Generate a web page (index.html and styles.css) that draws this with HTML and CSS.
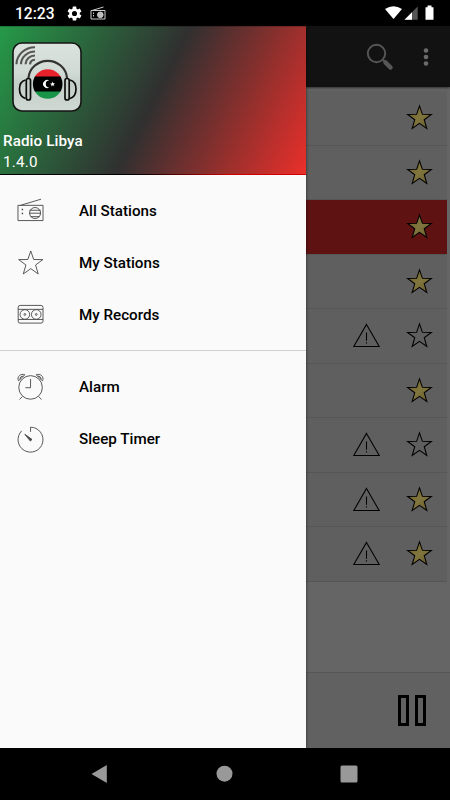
FILE: index.html
```html
<!DOCTYPE html>
<html lang="en">
<head>
    <meta charset="UTF-8">
    <meta name="viewport" content="width=device-width, initial-scale=1.0">
    <title>Radio Libya</title>
    <link rel="stylesheet" href="styles.css">
</head>
<body>
    <!-- Shared icons -->
    <svg class="defs">
        <defs>
            <linearGradient id="gold" x1="0" y1="0" x2="1" y2="1">
                <stop offset="0" stop-color="#6a5d22"/>
                <stop offset=".5" stop-color="#82763f"/>
                <stop offset="1" stop-color="#645a26"/>
            </linearGradient>
            <linearGradient id="plate" x1="0" y1="0" x2="0" y2="1">
                <stop offset="0" stop-color="#dce3df"/>
                <stop offset=".45" stop-color="#d0dad4"/>
                <stop offset=".6" stop-color="#c3cfc8"/>
                <stop offset="1" stop-color="#d0d9d3"/>
            </linearGradient>
            <clipPath id="flag"><circle cx="35.7" cy="42" r="14.8"/></clipPath>
        </defs>
        <symbol id="star" viewBox="0 0 28 28">
            <path d="M14 2 L17 10.7 L26.3 10.8 L18.9 16.3 L21.6 25.4 L14 20 L6.4 25.4 L9.1 16.3 L1.7 10.8 L11 10.7 Z"/>
        </symbol>
        <symbol id="warn" viewBox="0 0 28 28">
            <path d="M14 2.5 L27.2 25.5 H.8 Z M14 11 V19.5 M14 21 V22.3"/>
        </symbol>
    </svg>

    <div class="status-bar">
        <span class="clock">12:23</span>
        <svg class="gear" viewBox="0 0 24 24"><path fill="#fff" fill-rule="evenodd" d="M19.4 13a7 7 0 0 0 0-2l2.4-1.9-2.3-4-2.8 1.1a7 7 0 0 0-1.9-1L14.4 2H9.600l-.4 3.200a7 7 0 0 0-1.900 1L4.500 5.100l-2.300 4L4.600 11a7 7 0 0 0 0 2l-2.400 1.900 2.300 4 2.800-1.100a7 7 0 0 0 1.900 1l.4 3.200h4.800l.4-3.200a7 7 0 0 0 1.900-1l2.800 1.100 2.300-4zM12 15.600a3.600 3.600 0 1 1 0-7.200 3.600 3.600 0 0 1 0 7.200z"/></svg>
        <svg class="mini-radio" viewBox="0 0 16 14" fill="none" stroke="#ccc"><path d="M1 4.500h14v8.500h-14zM2 4.500 13.500 1M3.500 6.500v1.500M3.500 9v1.500"/><circle cx="10.300" cy="8.800" r="2.800" fill="#bbb"/></svg>
        <svg class="signals" viewBox="0 0 52 16">
            <path fill="#fff" d="M1 4 Q9.500 -1.500 18 4 L9.500 14 Z"/>
            <path fill="#555" d="M33.700 1.500 V14.700 H20.500 Z"/>
            <path fill="#fff" d="M28 7.200 V14.700 H20.500 Z"/>
            <path fill="#fff" d="M41.500 2.300h2V.5h4v1.800h2V14.700h-8z"/>
        </svg>
    </div>

    <div class="app">
        <div class="toolbar">
            <svg class="search" viewBox="0 0 28 28" fill="none" stroke="#565656"><circle cx="10.500" cy="10.500" r="8.700" stroke-width="1.900"/><path d="M17 17l4 4" stroke-width="2"/><path d="M19.500 19.500l5 5" stroke-width="4.500" stroke-linecap="round"/></svg>
            <svg class="more" viewBox="0 0 6 20" fill="#6b6b6b"><circle cx="3" cy="3.500" r="2.300"/><circle cx="3" cy="10" r="2.300"/><circle cx="3" cy="16.500" r="2.300"/></svg>
        </div>
        <div class="stations">
            <div class="station"><svg class="icon fav"><use href="#star"/></svg></div>
            <div class="station"><svg class="icon fav"><use href="#star"/></svg></div>
            <div class="station playing"><svg class="icon fav"><use href="#star"/></svg></div>
            <div class="station"><svg class="icon fav"><use href="#star"/></svg></div>
            <div class="station"><svg class="icon"><use href="#warn"/></svg><svg class="icon"><use href="#star"/></svg></div>
            <div class="station"><svg class="icon fav"><use href="#star"/></svg></div>
            <div class="station"><svg class="icon"><use href="#warn"/></svg><svg class="icon"><use href="#star"/></svg></div>
            <div class="station"><svg class="icon"><use href="#warn"/></svg><svg class="icon fav"><use href="#star"/></svg></div>
            <div class="station"><svg class="icon"><use href="#warn"/></svg><svg class="icon fav"><use href="#star"/></svg></div>
        </div>
        <div class="player">
            <span class="pause-bar"></span>
            <span class="pause-bar"></span>
        </div>

        <!-- Navigation drawer -->
        <div class="drawer">
            <div class="drawer-header">
                <svg class="logo" viewBox="0 0 70 70" fill="none">
                    <rect x="1" y="1" width="68" height="68" rx="9" fill="url(#plate)" stroke="#151515" stroke-width="1.600"/>
                    <g stroke="#555" stroke-width="2.100">
                        <path d="M4.500 22.300A18.500 17 0 0 1 23 5.300M9 22.300A14 13 0 0 1 23 9.500M13.500 22.300A9.500 9 0 0 1 23 13.500M18 22.300A5.500 5 0 0 1 23 17.700"/>
                    </g>
                    <g clip-path="url(#flag)">
                        <path fill="#e8212b" d="M20 27h31v8H20z"/>
                        <path fill="#000" d="M20 34.500h31V50H20z"/>
                        <path fill="#179447" d="M20 49.500h31v8H20z"/>
                    </g>
                    <path fill="#fff" d="M37.200 38.600a4 4 0 1 0 0 6.800 3.200 3.200 0 1 1 0-6.800z"/>
                    <path fill="#fff" d="M40.300 39.600l.7 1.700 1.900-.2-1.200 1.300.8 1.700-1.700-.8-1.500 1.200.2-1.800-1.700-1 1.900-.3z"/>
                    <path stroke="#333" stroke-width="2.200" d="M16.500 36A19.300 18.500 0 0 1 55 36"/>
                    <g stroke="#0c0c0c">
                        <rect x="14.300" y="36.500" width="4.200" height="21.500" rx="2" stroke-width="1.700"/>
                        <rect x="53" y="36.500" width="4.200" height="21.500" rx="2" stroke-width="1.700"/>
                        <path stroke-width="1.700" d="M13.500 38C5.500 40 5.500 54 13.500 56.500M58 38C66 40 66 54 58 56.500"/>
                    </g>
                </svg>
                <div class="app-name">Radio Libya</div>
                <div class="version">1.4.0</div>
            </div>
            <div class="menu">
                <div class="menu-item">
                    <svg class="menu-icon" viewBox="0 0 28 28"><path d="M1 8.500h25.500V24H1zM3.500 8.500 24.500 2.200M12.800 13.500H24M12.800 16.500H24M13.800 20H23"/><circle cx="18.400" cy="16.300" r="5.600"/><path d="M5.500 12v1.500M5.500 16v1.500" stroke-width="1.400"/></svg>
                    <span>All Stations</span>
                </div>
                <div class="menu-item">
                    <svg class="menu-icon"><use href="#star"/></svg>
                    <span>My Stations</span>
                </div>
                <div class="menu-item">
                    <svg class="menu-icon" viewBox="0 0 28 28"><rect x="1.200" y="4.500" width="25.300" height="18" rx="2"/><path d="M1.200 8.500h25.300M1.200 18.800h25.300"/><g fill="#fafafa"><circle cx="8" cy="13.700" r="4.900"/><circle cx="19.600" cy="13.700" r="4.900"/></g><circle cx="8" cy="13.700" r=".9"/><circle cx="19.600" cy="13.700" r=".9"/></svg>
                    <span>My Records</span>
                </div>
            </div>
            <div class="menu second">
                <div class="menu-item">
                    <svg class="menu-icon" viewBox="0 0 28 28"><circle cx="13.800" cy="14.700" r="12"/><path d="M13.800 6v9H8.500M5.500 24l-3 3M22 24l3 3M1.500 8C-.5 3.500 4 .2 8 1.800zM26 8C28 3.500 23.500.2 19.500 1.800zM3.200 6.500C2.500 4.500 4.500 3 6.500 3.200M24.300 6.500C25 4.500 23 3 21 3.200"/></svg>
                    <span>Alarm</span>
                </div>
                <div class="menu-item">
                    <svg class="menu-icon" viewBox="0 0 28 28"><path d="M13.800 6V1.200A12.700 12.700 0 1 1 4.800 4.900"/><path d="M8 8.500 15.300 13.700 13.600 15.300Z" fill="#444"/></svg>
                    <span>Sleep Timer</span>
                </div>
            </div>
        </div>
    </div>

    <div class="nav-bar">
        <svg viewBox="0 0 20 20"><path d="M2.500 10 17.800 1V19z"/></svg>
        <svg viewBox="0 0 20 20"><circle cx="10.500" cy="9.700" r="8"/></svg>
        <svg viewBox="0 0 20 20"><rect x="1.500" y="1.500" width="17" height="17" rx="1.500"/></svg>
    </div>
</body>
</html>
```

FILE: styles.css
```css
html, body {
    margin: 0;
    padding: 0;
    height: 100%;
    overflow: hidden;
}
body {
    display: flex;
    flex-direction: column;
    background: #000;
    font-family: Roboto, sans-serif;
}
svg {
    display: block;
    flex: none;
}
.defs {
    position: absolute;
    width: 0;
    height: 0;
}

/* Status bar */
.status-bar {
    display: flex;
    align-items: center;
    box-sizing: border-box;
    height: 26px;
    padding-left: 15px;
    padding-right: 14px;
    color: #fff;
}
.clock {
    width: 51px;
    padding-top: 2px;
    font-size: 15.6px;
    font-weight: 500;
    letter-spacing: 0;
}
.gear {
    width: 17px;
    height: 17px;
}
.mini-radio {
    width: 16px;
    height: 14px;
    margin-left: 7px;
}
.signals {
    width: 52px;
    height: 16px;
    margin-left: auto;
}

/* Main screen, dimmed behind the drawer */
.app {
    position: relative;
    display: flex;
    flex-direction: column;
    height: 722px;
    background: #656565;
}
.toolbar {
    display: flex;
    justify-content: flex-end;
    align-items: center;
    height: 61px;
    padding-right: 21px;
    background: #121212;
    box-shadow: 0 1px 2px #333;
}
.search {
    width: 28px;
    height: 28px;
    margin-right: 29px;
}
.more {
    width: 6px;
    height: 20px;
}
.stations {
    flex: 1;
    padding: 4px 3.5px 0 0;
}
.station {
    display: flex;
    justify-content: flex-end;
    align-items: center;
    gap: 26px;
    box-sizing: border-box;
    height: 54.5px;
    padding-right: 13.5px;
    background: #5f5f5f;
    border-bottom: 1px solid #565656;
}
.playing {
    background: #5e1212;
}
.icon {
    width: 27px;
    height: 27px;
    fill: none;
    stroke: #000;
    stroke-width: 1.1;
}
.fav {
    fill: url(#gold);
}
.player {
    display: flex;
    justify-content: flex-end;
    align-items: center;
    gap: 6px;
    box-sizing: border-box;
    height: 76px;
    padding-right: 24px;
    background: #616161;
    border-top: 1px solid #565656;
}
.pause-bar {
    box-sizing: border-box;
    width: 11px;
    height: 31px;
    border: 3px solid #000;
}

/* Drawer */
.drawer {
    position: absolute;
    top: 0;
    left: 0;
    width: 306px;
    height: 722px;
    background: #fafafa;
    box-shadow: 0 0 3px rgba(0, 0, 0, 0.6);
}
.drawer-header {
    box-sizing: border-box;
    height: 149px;
    padding: 16px 3px 0;
    color: #fff;
    background: linear-gradient(117deg, #259a48 0%, #303030 50%, #eb2f2a 100%);
    border-bottom: 1px solid;
    border-image: linear-gradient(to right, #000 45%, #c00 75%) 1;
    box-shadow: inset 0 1px 0 rgba(0, 0, 0, 0.2);
}
.logo {
    width: 70px;
    height: 70px;
    margin-left: 9px;
}
.app-name {
    margin-top: 19px;
    font-size: 15.2px;
    font-weight: 500;
    line-height: 20px;
    letter-spacing: 0.1px;
}
.version {
    font-size: 15.2px;
    line-height: 22px;
    letter-spacing: 0.2px;
}
.menu {
    padding: 9.5px 0 9px;
}
.second {
    border-top: 1px solid #d0d0d0;
}
.menu-item {
    display: flex;
    align-items: center;
    height: 52.3px;
    padding-left: 17px;
    color: #000;
    font-size: 15.2px;
    font-weight: 500;
    letter-spacing: 0;
}
.menu-icon {
    width: 27.5px;
    height: 27.5px;
    margin-right: 34.5px;
    fill: none;
    stroke: #444;
    stroke-width: 0.9;
}

/* Android navigation */
.nav-bar {
    display: flex;
    justify-content: space-between;
    align-items: center;
    height: 52px;
    padding: 0 91px 0 89px;
    fill: #999;
}
.nav-bar svg {
    width: 20px;
    height: 20px;
}
```
